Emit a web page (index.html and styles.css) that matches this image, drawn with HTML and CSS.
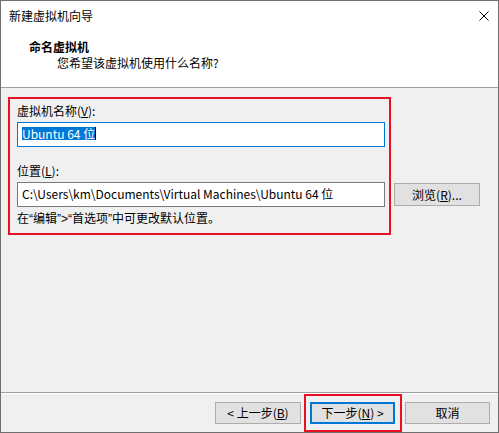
FILE: index.html
```html
<!DOCTYPE html>
<html lang="zh-CN">
<head>
<meta charset="utf-8">
<title>新建虚拟机向导</title>
<link rel="stylesheet" href="styles.css">
</head>
<body>
<div class="window">
  <div class="titlebar">
    <span class="title">新建虚拟机向导</span>
    <svg class="close" width="10" height="10" viewBox="0 0 10 10"><path d="M0.5 0.5 L9.5 9.5 M9.5 0.5 L0.5 9.5" stroke="#000" stroke-width="1" fill="none"/></svg>
  </div>
  <div class="header">
    <div class="h-title">命名虚拟机</div>
    <div class="h-sub">您希望该虚拟机使用什么名称?</div>
  </div>
  <div class="body">
    <div class="form">
      <div class="label">虚拟机名称(<u>V</u>):</div>
      <div class="field focused"><span class="sel">Ubuntu 64 位</span><span class="caret"></span></div>
      <div class="label gap">位置(<u>L</u>):</div>
      <div class="row">
        <div class="field">C:\Users\km\Documents\Virtual Machines\Ubuntu 64 位</div>
        <div class="btn browse">浏览(<u>R</u>)...</div>
      </div>
      <div class="hint">在<span class="q">“</span>编辑<span class="q">”&gt;“</span>首选项<span class="q">”</span>中可更改默认位置。</div>
    </div>
  </div>
  <div class="footer">
    <div class="btn back">&lt; 上一步(<u>B</u>)</div>
    <div class="btn next">下一步(<u>N</u>) &gt;</div>
    <div class="btn cancel">取消</div>
  </div>
  <div class="mark mark-form"></div>
  <div class="mark mark-next"></div>
</div>
</body>
</html>
```

FILE: styles.css
```css
html, body {
  margin: 0;
  padding: 0;
  background: #ffffff;
}
body {
  font-family: "Noto Sans CJK SC", "Noto Sans", sans-serif;
  font-size: 12px;
  line-height: 16px;
  color: #000;
}
.window {
  position: relative;
  width: 499px;
  height: 433px;
  box-sizing: border-box;
  border: 1px solid #6f6f6f;
  display: flex;
  flex-direction: column;
  background: #f0f0f0;
}
.titlebar {
  height: 29px;
  background: #fff;
  display: flex;
  align-items: center;
  justify-content: space-between;
  padding: 0 9px 0 8px;
}
.close {
  display: block;
}
.header {
  background: #fff;
  box-sizing: border-box;
  padding: 9px 0 0 28px;
  border-bottom: 1px solid #a0a0a0;
  height: 58px;
}
.h-title {
  font-weight: bold;
}
.h-sub {
  margin-left: 28px;
}
.body {
  flex: 1;
}
.form {
  padding: 15px 0 0 16px;
}
.label.gap {
  margin-top: 16px;
}
.field {
  box-sizing: border-box;
  width: 368px;
  height: 25px;
  margin-top: 3px;
  border: 1px solid #7a7a7a;
  background: #fff;
  padding: 3px 0 0 4px;
  white-space: nowrap;
  overflow: hidden;
}
.field.focused {
  border-color: #0078d7;
}
.sel {
  background: #0078d7;
  color: #fff;
  display: inline-block;
  line-height: 13px;
  height: 13px;
  margin-top: 1px;
  vertical-align: top;
}
.caret {
  display: inline-block;
  width: 1px;
  height: 13px;
  margin-top: 1px;
  background: #000;
  vertical-align: top;
}
.row {
  display: flex;
  align-items: flex-start;
}
.btn {
  box-sizing: border-box;
  height: 22px;
  border: 1px solid #adadad;
  background: #e1e1e1;
  display: flex;
  align-items: center;
  justify-content: center;
  white-space: nowrap;
}
.browse {
  width: 86px;
  height: 23px;
  margin: 4px 0 0 9px;
}
.hint {
  margin-top: 3px;
}
.q {
  font-family: "Liberation Sans", sans-serif;
}
.footer {
  border-top: 1px solid #a0a0a0;
  box-shadow: inset 0 1px 0 #ffffff;
  padding: 9px 8px 8px 0;
  display: flex;
  justify-content: flex-end;
}
.back {
  width: 86px;
}
.next {
  width: 85px;
  margin-left: 9px;
  border: 2px solid #0078d7;
}
.cancel {
  width: 85px;
  margin-left: 10px;
}
.mark {
  position: absolute;
  box-sizing: border-box;
  border: 2px solid #e81123;
}
.mark-form {
  left: 7px;
  top: 96px;
  width: 383px;
  height: 138px;
}
.mark-next {
  left: 303px;
  top: 393px;
  width: 98px;
  height: 38px;
}
```
